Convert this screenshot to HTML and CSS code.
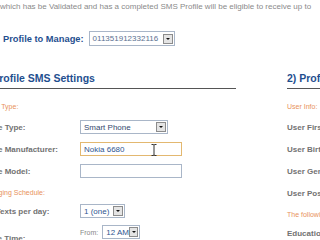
FILE: index.html
```html
<!DOCTYPE html>
<html>
  <head>
    <meta charset="UTF-8">
    <title>SMS Profile Settings</title>
    <link rel="stylesheet" href="styles.css">
  </head>
  <body>
    <p class="intro">which has be Validated and has a completed SMS Profile will be eligible to receive up to</p>

    <div class="manage">
      <span class="manage-label">Profile to Manage:</span>
      <div class="select select-profile">
        <span class="value">011351912332116</span>
        <span class="arrow"></span>
      </div>
    </div>

    <div class="settings">
      <div class="column column-left">
        <h2>1) Profile SMS Settings</h2>
        <div class="sub">Device Type:</div>
        <div class="row">
          <label>Phone Type:</label>
          <div class="select select-type">
            <span class="value">Smart Phone</span>
            <span class="arrow"></span>
          </div>
        </div>
        <div class="row">
          <label>Phone Manufacturer:</label>
          <div class="input input-focus">
            <span class="value">Nokia 6680</span>
            <svg class="ibeam" width="6" height="12" viewBox="0 0 6 12">
              <path d="M0.5 0.5h2l0.5 0.6 0.5-0.6h2M3 1v10M0.5 11.5h2l0.5-0.6 0.5 0.6h2" fill="none" stroke="#333" stroke-width="1"/>
            </svg>
          </div>
        </div>
        <div class="row">
          <label>Phone Model:</label>
          <div class="input"></div>
        </div>
        <div class="sub">Messaging Schedule:</div>
        <div class="row">
          <label>Max Texts per day:</label>
          <div class="select select-texts">
            <span class="value">1 (one)</span>
            <span class="arrow"></span>
          </div>
        </div>
        <div class="row row-time">
          <label>Active Time:</label>
          <div class="time">
            <span class="from">From:</span>
            <div class="select select-time">
              <span class="value">12 AM</span>
              <span class="arrow"></span>
            </div>
          </div>
        </div>
      </div>

      <div class="column column-right">
        <h2>2) Profile Information</h2>
        <div class="sub">User Info:</div>
        <div class="row"><label>User First Name:</label></div>
        <div class="row"><label>User Birthday:</label></div>
        <div class="row"><label>User Gender:</label></div>
        <div class="row"><label>User Postal Code:</label></div>
        <div class="sub">The following is optional:</div>
        <div class="row"><label>Education:</label></div>
      </div>
    </div>
  </body>
</html>
```

FILE: styles.css
```css
body {
  margin: 0;
  background-color: #fff;
  font-family: "Liberation Sans", Arial, sans-serif;
  overflow: hidden;
}

.intro {
  margin: 0;
  padding-top: 2px;
  font-size: 8px;
  line-height: 10px;
  color: #8a8a8a;
  white-space: nowrap;
}

.manage {
  display: flex;
  align-items: center;
  gap: 5px;
  margin-top: 18px;
  padding-left: 3px;
  height: 17px;
}

.manage-label {
  font-size: 9.3px;
  font-weight: bold;
  color: #1f4f8f;
}

.select,
.input {
  box-sizing: border-box;
  display: flex;
  align-items: center;
  height: 14px;
  border: 1px solid #a9b6c8;
  background-color: #fff;
  font-size: 8px;
  color: #2f5590;
  padding-left: 3px;
}

.select .value {
  flex: 1;
  white-space: nowrap;
}

.arrow {
  box-sizing: border-box;
  width: 10px;
  height: 10px;
  margin-right: 1px;
  border: 1px solid #8c8c8c;
  background-color: #e4e4e4;
  position: relative;
}

.arrow::after {
  content: "";
  position: absolute;
  left: 2px;
  top: 3px;
  border-left: 2px solid transparent;
  border-right: 2px solid transparent;
  border-top: 2px solid #111;
}

.select-profile {
  width: 86px;
  height: 15px;
  color: #5a7090;
}

.settings {
  display: flex;
  gap: 51px;
  margin-left: -22px;
  margin-top: 24px;
}

.column {
  flex: none;
}

.column-left {
  width: 258px;
}

.column-right {
  width: 200px;
}

h2 {
  margin: 0;
  font-size: 10.5px;
  line-height: 14px;
  color: #1f4f8f;
  padding-bottom: 3px;
  border-bottom: 1.5px solid #555;
}

.column-left h2 {
  padding-left: 2px;
}

.sub {
  margin-top: 9px;
  height: 18px;
  line-height: 18px;
  font-size: 7px;
  color: #e8925c;
}

.row + .sub {
  margin-top: 3px;
  height: 15px;
  line-height: 15px;
}

.row {
  display: flex;
  align-items: center;
  height: 22px;
}

label {
  width: 102px;
  flex: none;
  font-size: 8px;
  font-weight: bold;
  color: #727272;
}

.select-type {
  width: 88px;
  color: #34496e;
}

.input {
  width: 102px;
  color: #2f5590;
  position: relative;
}

.input-focus {
  border-color: #e3b870;
}

.ibeam {
  position: absolute;
  left: 70px;
  top: 1px;
}

.select-texts {
  width: 45px;
}

.row-time {
  align-items: flex-start;
}

.row-time label {
  padding-top: 12px;
}

.time {
  display: flex;
  align-items: center;
  gap: 4px;
  padding-top: 3px;
}

.from {
  font-size: 7px;
  color: #888;
}

.select-time {
  width: 38px;
}
```
